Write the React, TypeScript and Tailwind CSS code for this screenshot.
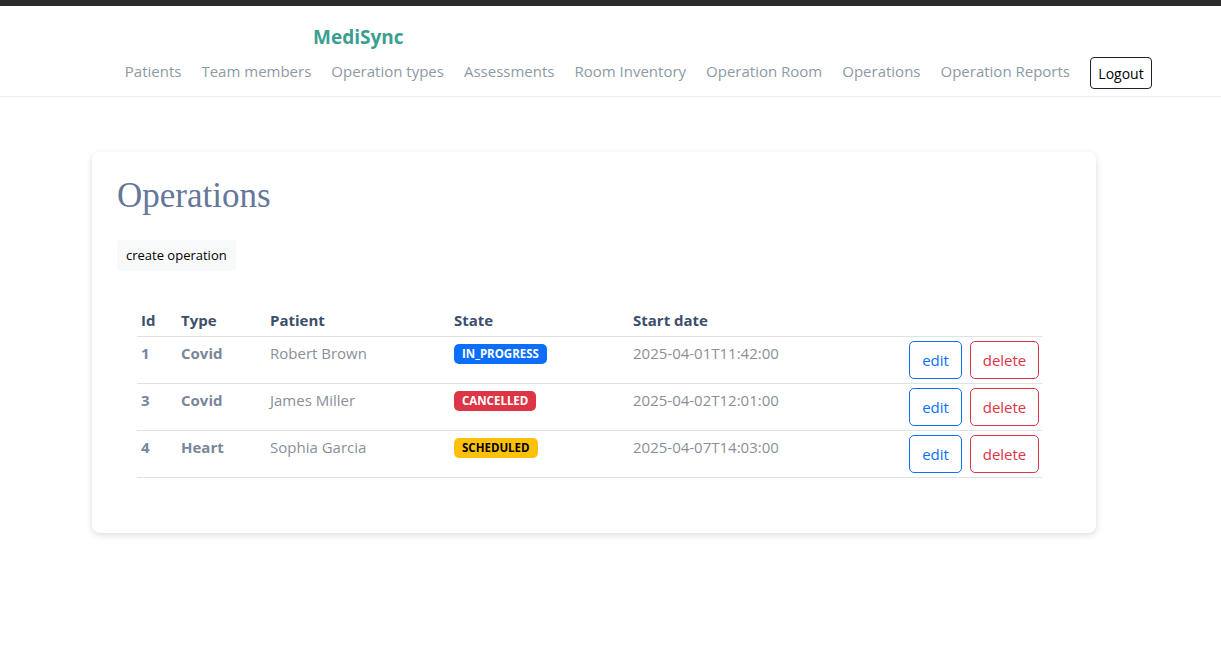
import { useState } from 'react'

const navLinks = [
  'Patients',
  'Team members',
  'Operation types',
  'Assessments',
  'Room Inventory',
  'Operation Room',
  'Operations',
  'Operation Reports',
]

type Operation = {
  id : number
  type : string
  patient : string
  state : 'IN_PROGRESS' | 'CANCELLED' | 'SCHEDULED'
  startDate : string
}

const stateStyles : Record<Operation['state'], string> = {
  IN_PROGRESS: 'bg-[#0d6efd] text-white',
  CANCELLED: 'bg-[#dc3545] text-white',
  SCHEDULED: 'bg-[#ffc107] text-black',
}

export default function App() {

  const [ operations ] = useState<Operation[]>( [
    { id: 1, type: 'Covid', patient: 'Robert Brown', state: 'IN_PROGRESS', startDate: '2025-04-01T11:42:00' },
    { id: 3, type: 'Covid', patient: 'James Miller', state: 'CANCELLED', startDate: '2025-04-02T12:01:00' },
    { id: 4, type: 'Heart', patient: 'Sophia Garcia', state: 'SCHEDULED', startDate: '2025-04-07T14:03:00' },
  ] )

  return (
    <div className="min-h-screen bg-white font-['Open_Sans',sans-serif]">
      <div className="h-[6px] bg-[#2b2b2b]" />

      <header className="h-[91px] border-b border-[#ececec]">
        <div className="pl-[313px] pt-[13px] h-[49px] text-[19px] leading-[36px] font-bold text-[#3a9f8f]">
          MediSync
        </div>
        <nav className="flex items-start justify-end pr-[69px] mt-[2px] gap-[20px]">
          {
            navLinks.map( ( link ) => (
              <a key={link} href="#" className="mt-[2px] text-[15px] leading-[24px] text-[#8c9aa6]">
                {link}
              </a>
            ) )
          }
          <button className="h-[32px] w-[62px] border border-[#222] rounded-[4px] text-[14px] text-black">
            Logout
          </button>
        </nav>
      </header>

      <main className="pt-[55px] pl-[92px]">
        <section className="w-[1004px] rounded-[8px] bg-white shadow-[0_2px_6px_rgba(60,60,100,0.18)] px-[25px] pt-[22px] pb-[55px]">
          <h1 className="font-['Liberation_Serif',serif] text-[35px] leading-[44px] text-[#667799]">
            Operations
          </h1>
          <button className="mt-[22px] h-[31px] px-[9px] rounded-[4px] bg-[#f8f9fa] text-[13px] text-black">
            create operation
          </button>

          <table className="mt-[33px] ml-[20px] w-[905px] border-collapse text-left text-[15px]">
            <thead>
              <tr className="border-b border-[#dee2e6] text-[#3d4f6b]">
                <th className="w-[40px] px-[4px] py-[4px] leading-[24px] font-bold">Id</th>
                <th className="w-[89px] px-[4px] py-[4px] leading-[24px] font-bold">Type</th>
                <th className="w-[184px] px-[4px] py-[4px] leading-[24px] font-bold">Patient</th>
                <th className="w-[179px] px-[4px] py-[4px] leading-[24px] font-bold">State</th>
                <th className="w-[200px] px-[4px] py-[4px] leading-[24px] font-bold">Start date</th>
                <th className="px-[4px] py-[4px]" />
              </tr>
            </thead>
            <tbody>
              {
                operations.map( ( op ) => (
                  <tr key={op.id} className="border-b border-[#dee2e6] align-top">
                    <td className="px-[4px] py-[4px] leading-[24px] font-bold text-[#7a8699]">{op.id}</td>
                    <td className="px-[4px] py-[4px] leading-[24px] font-bold text-[#7a8699]">{op.type}</td>
                    <td className="px-[4px] py-[4px] leading-[24px] text-[#8a8f99]">{op.patient}</td>
                    <td className="px-[4px] pt-[4px] pb-[4px]">
                      <span className={`inline-block rounded-[5px] px-[8px] py-[2px] text-[11.5px] leading-[16px] font-bold ${stateStyles[op.state]}`}>
                        {op.state}
                      </span>
                    </td>
                    <td className="px-[4px] py-[4px] leading-[24px] text-[#8a8f99]">{op.startDate}</td>
                    <td className="px-[3px] py-[4px]">
                      <div className="flex justify-end gap-[8px]">
                        <button className="h-[38px] w-[53px] rounded-[5px] border border-[#0d6efd] text-[15px] text-[#0d6efd]">
                          edit
                        </button>
                        <button className="h-[38px] w-[69px] rounded-[5px] border border-[#dc3545] text-[15px] text-[#dc3545]">
                          delete
                        </button>
                      </div>
                    </td>
                  </tr>
                ) )
              }
            </tbody>
          </table>
        </section>
      </main>
    </div>
  )
}
